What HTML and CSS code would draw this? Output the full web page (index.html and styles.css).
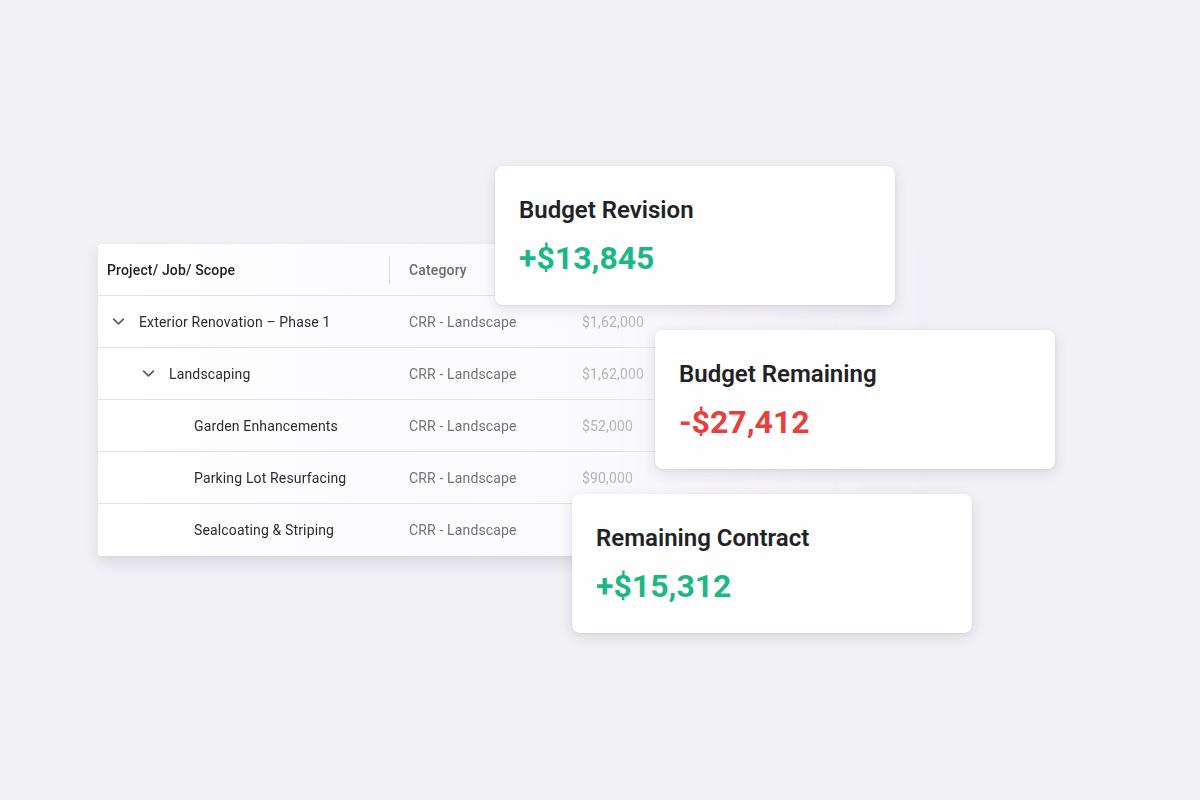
FILE: index.html
```html
<!DOCTYPE html>
<html lang="en">
<head>
<meta charset="utf-8">
<title>Budget overview</title>
<link rel="stylesheet" href="styles.css">
</head>
<body>
<div class="stage">
  <div class="table-wrap">
    <div class="table">
      <div class="row head">
        <div class="cell c1">Project/ Job/ Scope</div>
        <div class="cell c2"><span class="divider"></span>Category</div>
        <div class="cell c3"></div>
      </div>
      <div class="row">
        <div class="cell c1 lvl1"><svg class="chev" viewBox="0 0 12 8"><path d="M1.5 1.8 6 6.2 10.5 1.8"/></svg>Exterior Renovation – Phase 1</div>
        <div class="cell c2">CRR - Landscape</div>
        <div class="cell c3">$1,62,000</div>
      </div>
      <div class="row">
        <div class="cell c1 lvl2"><svg class="chev" viewBox="0 0 12 8"><path d="M1.5 1.8 6 6.2 10.5 1.8"/></svg>Landscaping</div>
        <div class="cell c2">CRR - Landscape</div>
        <div class="cell c3">$1,62,000</div>
      </div>
      <div class="row">
        <div class="cell c1 lvl3">Garden Enhancements</div>
        <div class="cell c2">CRR - Landscape</div>
        <div class="cell c3">$52,000</div>
      </div>
      <div class="row">
        <div class="cell c1 lvl3">Parking Lot Resurfacing</div>
        <div class="cell c2">CRR - Landscape</div>
        <div class="cell c3">$90,000</div>
      </div>
      <div class="row last">
        <div class="cell c1 lvl3">Sealcoating &amp; Striping</div>
        <div class="cell c2">CRR - Landscape</div>
        <div class="cell c3"></div>
      </div>
    </div>
  </div>

  <div class="card card-revision">
    <div class="card-title">Budget Revision</div>
    <div class="card-value pos">+$13,845</div>
  </div>
  <div class="card card-remaining">
    <div class="card-title">Budget Remaining</div>
    <div class="card-value neg">-$27,412</div>
  </div>
  <div class="card card-contract">
    <div class="card-title">Remaining Contract</div>
    <div class="card-value pos">+$15,312</div>
  </div>
</div>
</body>
</html>
```

FILE: styles.css
```css
* { box-sizing: border-box; }
html, body {
  margin: 0;
  padding: 0;
  background: #f2f1f6;
  font-family: Roboto, "Liberation Sans", Arial, sans-serif;
}
.stage {
  position: relative;
  width: 1200px;
  height: 800px;
  overflow: hidden;
  padding-top: 224px;
  padding-left: 78px;
}
.table-wrap {
  width: 912px;
  padding: 20px;
  -webkit-mask-image: linear-gradient(90deg, #000 0%, #000 58%, rgba(0,0,0,0.55) 68%, rgba(0,0,0,0.15) 85%, transparent 98%);
  mask-image: linear-gradient(90deg, #000 0%, #000 58%, rgba(0,0,0,0.55) 68%, rgba(0,0,0,0.15) 85%, transparent 98%);
}
.table {
  width: 872px;
  background: linear-gradient(90deg, #ffffff 0%, #fbfafd 40%, #f7f6fa 100%);
  border-radius: 4px;
  box-shadow: 0 7px 14px rgba(40, 36, 60, 0.12), 0 0 3px rgba(40, 36, 60, 0.05);
}
.row {
  display: flex;
  height: 52px;
  border-bottom: 1px solid #e3e2e8;
}
.row.last { border-bottom: none; }
.cell {
  display: flex;
  align-items: center;
  font-size: 14px;
  letter-spacing: 0.15px;
}
.c1 {
  width: 291px;
  color: #2b2b2e;
}
.c2 {
  position: relative;
  width: 173px;
  padding-left: 20px;
  color: #737278;
}
.c3 {
  flex: 1;
  padding-left: 20px;
  color: #b3b2b8;
}
.head .c1 {
  padding-left: 9px;
  font-weight: 500;
  color: #1f1f22;
}
.head .c2 { color: #6b6a70; font-weight: 500; }
.divider {
  position: absolute;
  left: 0;
  top: 12px;
  height: 28px;
  width: 1px;
  background: #dddce2;
}
.lvl1 { padding-left: 14px; }
.lvl2 { padding-left: 44px; }
.lvl3 { padding-left: 96px; }
.chev {
  width: 13px;
  height: 9px;
  margin-right: 14px;
  fill: none;
  stroke: #5d5c63;
  stroke-width: 1.6;
  stroke-linecap: round;
  stroke-linejoin: round;
}

.card {
  position: absolute;
  width: 400px;
  height: 139px;
  background: #fefeff;
  border-radius: 8px;
  box-shadow: 0 4px 14px rgba(40, 36, 60, 0.12), 0 1px 3px rgba(40, 36, 60, 0.06);
  padding: 28px 24px 0;
}
.card-revision { left: 495px; top: 166px; }
.card-remaining { left: 655px; top: 330px; }
.card-contract { left: 572px; top: 494px; }
.card-title {
  font-size: 24px;
  line-height: 32px;
  font-weight: 600;
  color: #222225;
}
.card-value {
  margin-top: 12px;
  font-size: 32px;
  line-height: 40px;
  font-weight: 700;
}
.pos { color: #1cb784; }
.neg { color: #e5403e; }
```
